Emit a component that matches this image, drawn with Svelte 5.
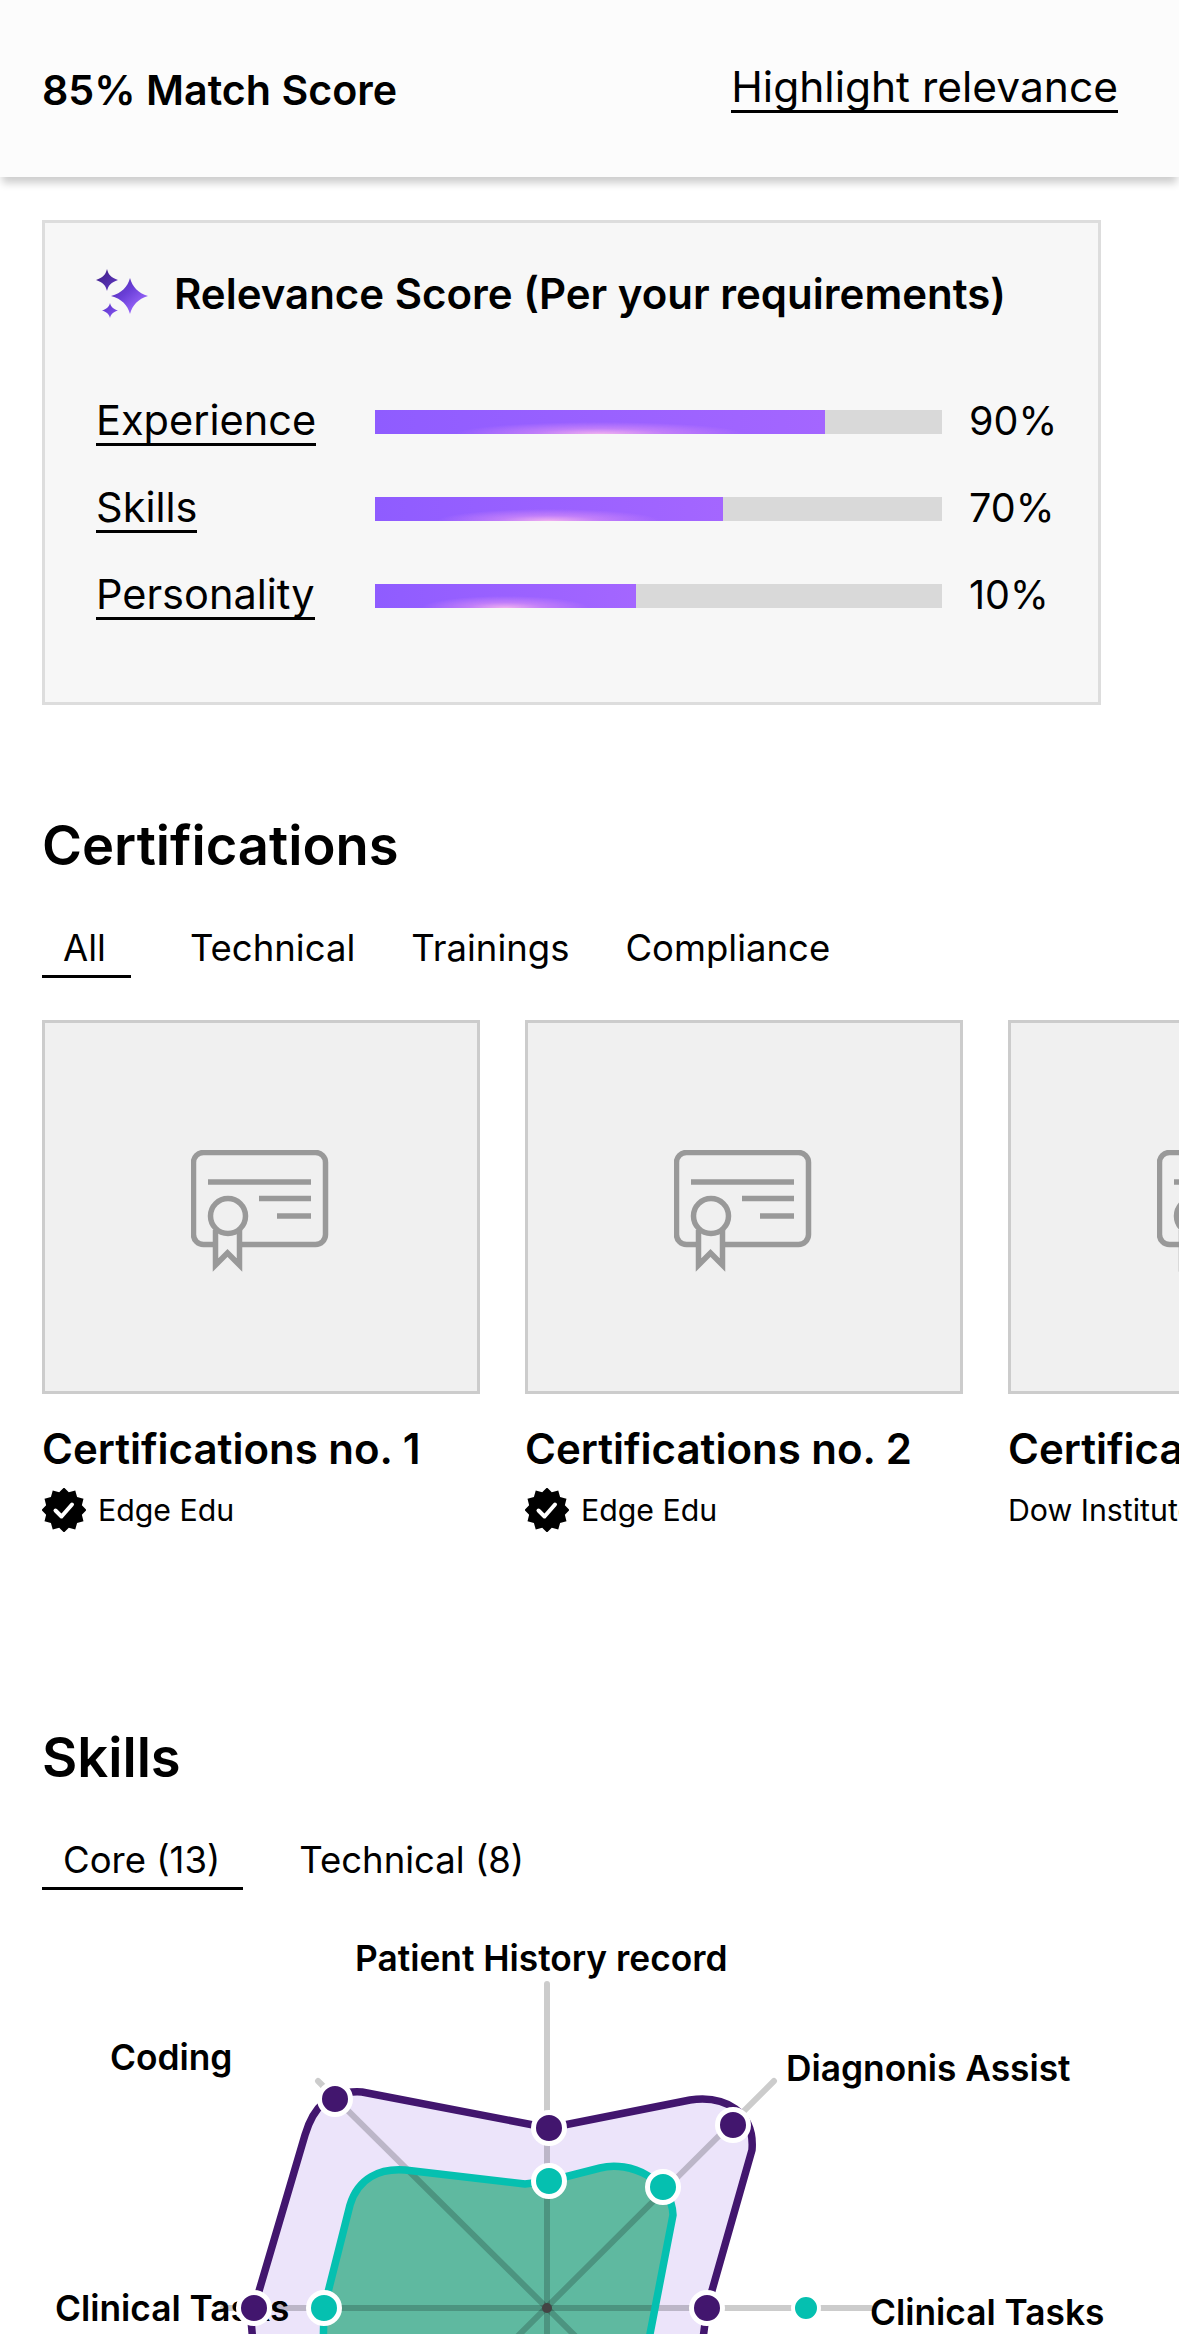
<script>
	const scores = [
		{ name: 'Experience', value: 90, fill: 79.4 },
		{ name: 'Skills', value: 70, fill: 61.4 },
		{ name: 'Personality', value: 10, fill: 46.1 }
	];
	const certTabs = ['All', 'Technical', 'Trainings', 'Compliance'];
	const skillTabs = ['Core (13)', 'Technical (8)'];
	const certs = [
		{ title: 'Certifications no. 1', org: 'Edge Edu', verified: true },
		{ title: 'Certifications no. 2', org: 'Edge Edu', verified: true },
		{ title: 'Certifications no. 3', org: 'Dow Institute', verified: false }
	];

	// 12 point seal for the verified badge
	const seal = Array.from({ length: 24 }, (_, i) => {
		const r = i % 2 ? 18.5 : 22.5;
		const a = (i * Math.PI) / 12 - Math.PI / 2;
		return `${(22 + r * Math.cos(a)).toFixed(2)},${(22 + r * Math.sin(a)).toFixed(2)}`;
	}).join(' ');

	// chart is drawn in page coords, minus the svg's top
	const top = 1910;
	const cx = 547;
	const cy = 2308 - top;
	const axes = [
		[547, 1984, 547, 2640],
		[223, 2308, 871, 2308],
		[318, 2081, 776, 2535],
		[774, 2081, 318, 2535]
	];
	const purple = [[335, 2099], [549, 2128], [733, 2125], [707, 2308], [254, 2308]];
	const teal = [[324, 2308], [549, 2181], [663, 2187]];
</script>

<div class="page">
	<header class="topbar">
		<span class="match">85% Match Score</span>
		<span class="highlight">Highlight relevance</span>
	</header>

	<section class="relevance">
		<div class="rel-title">
			<svg class="sparkle" width="56" height="50" viewBox="0 0 56 50">
				<defs>
					<linearGradient id="spark" gradientUnits="userSpaceOnUse" x1="4" y1="4" x2="40" y2="46">
						<stop offset="0" stop-color="#43228c" />
						<stop offset="0.6" stop-color="#6a3fd8" />
						<stop offset="1" stop-color="#a06cff" />
					</linearGradient>
				</defs>
				<path fill="url(#spark)" d="M12 0 C13.5 6 16 8.5 23 11 C16 13.5 13.5 16 12 22 C10.5 16 8 13.5 1 11 C8 8.5 10.5 6 12 0Z" />
				<path fill="url(#spark)" d="M35 9 C37.5 18 43 24 53 27 C43 30 37.5 36 35 45 C32.5 36 27 30 16 27 C27 24 32.5 18 35 9Z" />
				<path fill="url(#spark)" d="M15 34 C16 38 18.5 40 23 41.5 C18.5 43 16 45 15 49 C14 45 11.5 43 7 41.5 C11.5 40 14 38 15 34Z" />
			</svg>
			<h2>Relevance Score (Per your requirements)</h2>
		</div>
		<div class="rows">
			{#each scores as s}
				<div class="row">
					<span class="label"><span>{s.name}</span></span>
					<div class="track">
						<div class="fill" style="width: {s.fill}%"></div>
					</div>
					<span class="pct">{s.value}%</span>
				</div>
			{/each}
		</div>
	</section>

	<section class="certs">
		<h2 class="heading">Certifications</h2>
		<div class="tabs">
			{#each certTabs as t, i}
				<span class="tab" class:active={i === 0}>{t}</span>
			{/each}
		</div>
		<div class="cards">
			{#each certs as c}
				<div class="card">
					<div class="thumb">
						<svg width="140" height="122" viewBox="0 0 140 122" fill="none" stroke="#999" stroke-width="5.5">
							<rect x="2.5" y="2.5" width="132" height="92" rx="10" />
							<path d="M17 32H120M68 48.5H120M86 66H120" />
							<path d="M24.5 80V115L36.5 103L48.5 115V80" fill="#f0f0f0" />
							<circle cx="37" cy="66" r="17.5" fill="#f0f0f0" />
						</svg>
					</div>
					<div class="card-title">{c.title}</div>
					<div class="org">
						{#if c.verified}
							<svg width="44" height="44" viewBox="0 0 44 44">
								<polygon points={seal} fill="#000" />
								<path d="M13.5 22.5L19.5 28.5L30 16.5" fill="none" stroke="#fff" stroke-width="4" stroke-linecap="round" stroke-linejoin="round" />
							</svg>
						{/if}
						<span>{c.org}</span>
					</div>
				</div>
			{/each}
		</div>
	</section>

	<section class="skills">
		<h2 class="heading">Skills</h2>
		<div class="tabs">
			{#each skillTabs as t, i}
				<span class="tab" class:active={i === 0}>{t}</span>
			{/each}
		</div>
		<svg class="radar" width="1179" height="424" viewBox="0 {top} 1179 424">
			<path class="purple-fill" d="M254 2308 L305 2135 C313 2108 328 2090 362 2092 L549 2128 L690 2100 C725 2095 755 2112 752 2150 L707 2308 L700 2400 L258 2400Z" />
			<path class="teal-fill" d="M324 2308 L350 2205 C358 2178 380 2168 405 2170 L525 2184 L549 2181 L600 2168 C630 2160 672 2180 673 2215 L650 2334 L640 2400 L320 2400Z" />

			{#each axes as a}
				<line class="axis" x1={a[0]} y1={a[1]} x2={a[2]} y2={a[3]} />
			{/each}

			<path class="purple-line" d="M258 2400 L251 2320 L254 2308 L305 2135 C313 2108 328 2090 362 2092 L549 2128 L690 2100 C725 2095 755 2112 752 2150 L707 2308 L695 2400" />
			<path class="teal-line" d="M322 2400 L324 2308 L350 2205 C358 2178 380 2168 405 2170 L525 2184 L549 2181 L600 2168 C630 2160 672 2180 673 2215 L650 2334 L640 2400" />

			<circle cx={cx} cy={cy + top} r="5" fill="#444" />

			<text class="lbl" x="355" y="1971">Patient History record</text>
			<text class="lbl" x="110" y="2070">Coding</text>
			<text class="lbl" x="786" y="2081">Diagnonis Assist</text>
			<text class="lbl" x="55" y="2321">Clinical Tasks</text>
			<text class="lbl" x="870" y="2325">Clinical Tasks</text>

			{#each purple as p}
				<circle class="dot-purple" cx={p[0]} cy={p[1]} r="15.5" />
			{/each}
			{#each teal as p}
				<circle class="dot-teal" cx={p[0]} cy={p[1]} r="15.5" />
			{/each}
			<line x1="795" y1="2308" x2="817" y2="2308" stroke="#fff" stroke-width="8" />
			<circle cx="806" cy="2308" r="13" fill="#05c0b0" stroke="#fff" stroke-width="4" />
		</svg>
	</section>
</div>

<style>
	:global(body) {
		background: #fff;
	}

	.page {
		width: 1179px;
		height: 2334px;
		overflow: hidden;
		font-family: Inter, "Liberation Sans", sans-serif;
		color: #000;
		background: #fff;
	}

	.topbar {
		height: 177px;
		box-sizing: border-box;
		padding: 0 61px 0 42px;
		display: flex;
		justify-content: space-between;
		align-items: center;
		background: #fcfcfc;
		box-shadow: 0 8px 8px -2px rgba(0, 0, 0, 0.2);
	}

	.match {
		font-size: 41.2px;
		font-weight: 600;
		margin-top: 2px;
	}

	.highlight {
		font-size: 42.5px;
		line-height: 47px;
		padding-top: 3px;
		border-bottom: 3px solid #000;
		margin-bottom: 5px;
	}

	.relevance {
		margin: 43px 0 0 42px;
		width: 1059px;
		height: 485px;
		box-sizing: border-box;
		border: 3px solid #ddd;
		background: #f7f7f7;
		padding: 45px 0 0 50px;
	}

	.rel-title {
		display: flex;
		align-items: center;
		gap: 23px;
	}

	.sparkle {
		flex: none;
	}

	.rel-title h2 {
		margin: 0;
		font-size: 42px;
		font-weight: 600;
	}

	.rows {
		margin: 76px 0 0 2px;
		display: flex;
		flex-direction: column;
		gap: 37px;
	}

	.row {
		display: grid;
		grid-template-columns: 252px 567px auto;
		column-gap: 26px;
		align-items: center;
		height: 50px;
		font-size: 41.5px;
	}

	.label span {
		display: inline-block;
		line-height: 46px;
		border-bottom: 3px solid #000;
		margin-left: -1px;
	}

	.pct {
		font-size: 39.5px;
		padding-left: 1px;
	}

	.track {
		height: 24px;
		margin-top: 2px;
		background: #d9d9d9;
	}

	.fill {
		height: 100%;
		background:
			radial-gradient(ellipse 32% 50% at 50% 100%, #f0b0f0 0%, rgba(225, 150, 245, 0.55) 45%, rgba(170, 110, 255, 0) 100%),
			linear-gradient(90deg, #8f5cff, #a466ff);
	}

	.certs {
		margin-top: 66px;
		padding-left: 42px;
	}

	.heading {
		margin: 0;
		font-size: 54.3px;
		line-height: 64px;
		font-weight: 600;
		padding-top: 42px;
	}

	.tabs {
		display: flex;
		gap: 56px;
		margin-top: 47px;
		font-size: 36.5px;
	}

	.tab {
		line-height: 48px;
		padding-bottom: 3px;
		border-bottom: 3px solid transparent;
	}

	.tab:first-child {
		padding-left: 21px;
		padding-right: 25px;
	}

	.certs .tab:first-child {
		margin-right: 3px;
	}

	.skills .tab:first-child {
		padding-right: 23px;
	}

	.tab.active {
		border-bottom-color: #000;
	}

	.cards {
		display: flex;
		gap: 45px;
		margin-top: 42px;
		width: 1200px;
	}

	.card {
		width: 438px;
		flex: none;
	}

	.thumb {
		height: 374px;
		box-sizing: border-box;
		border: 3px solid #ccc;
		background: #f0f0f0;
		display: flex;
		align-items: center;
		justify-content: center;
		padding-top: 8px;
	}

	.card-title {
		margin-top: 30px;
		font-size: 42px;
		line-height: 50px;
		font-weight: 600;
		white-space: nowrap;
	}

	.org {
		margin-top: 14px;
		display: flex;
		align-items: center;
		gap: 12px;
		height: 44px;
		font-size: 30.3px;
		white-space: nowrap;
	}

	.skills {
		margin-top: 151px;
		padding-left: 42px;
	}

	.radar {
		display: block;
		margin: 20px 0 0 -42px;
		overflow: hidden;
	}

	.lbl {
		font-size: 35.3px;
		font-weight: 600;
		fill: #000;
	}

	.axis {
		stroke: rgba(0, 0, 0, 0.2);
		stroke-width: 6;
		stroke-linecap: round;
	}

	.purple-fill {
		fill: #ece4fa;
	}

	.teal-fill {
		fill: #5fb9a0;
	}

	.purple-line,
	.teal-line {
		fill: none;
		stroke-width: 7.5;
		stroke-linejoin: round;
	}

	.purple-line {
		stroke: #42166e;
	}

	.teal-line {
		stroke: #05c0b0;
	}

	.dot-purple,
	.dot-teal {
		stroke: #fff;
		stroke-width: 5;
	}

	.dot-purple {
		fill: #42166e;
	}

	.dot-teal {
		fill: #05c0b0;
	}
</style>
